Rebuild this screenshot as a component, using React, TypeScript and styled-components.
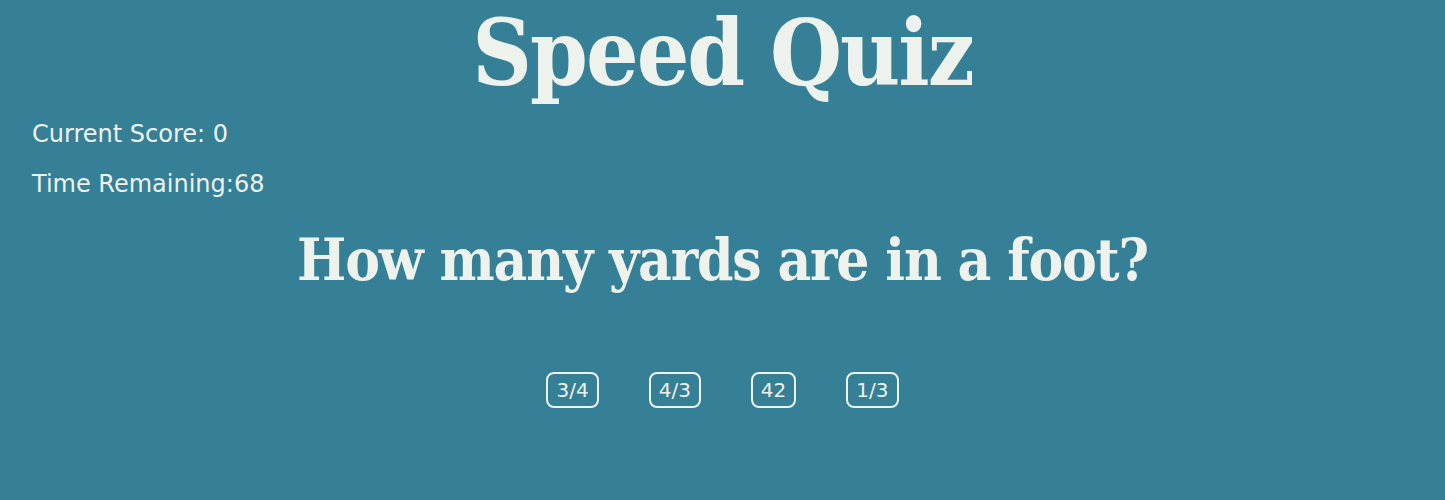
import React from "react";
import styled, { createGlobalStyle } from "styled-components";

const Global = createGlobalStyle`
  html, body { margin: 0; padding: 0; background: #358096; }
  body { font-family: "DejaVu Sans", sans-serif; color: #eef2ec; }
`;

const Page = styled.main`
  min-height: 500px;
  background: #358096;
  color: #eef2ec;
  display: flex;
  flex-direction: column;
`;

const Title = styled.h1`
  margin: 0 0 10px;
  text-align: center;
  font-family: "DejaVu Serif Condensed", "DejaVu Serif", serif;
  font-stretch: condensed;
  font-weight: 700;
  font-size: 92px;
  line-height: 106px;
  letter-spacing: -2px;
`;

const Stats = styled.div`
  padding-left: 32px;
  display: flex;
  flex-direction: column;
  gap: 14px;
`;

const Stat = styled.p`
  margin: 0;
  font-family: "DejaVu Sans", sans-serif;
  font-size: 24px;
  line-height: 36px;
`;

const Question = styled.h2`
  margin: 18px 0 0;
  text-align: center;
  font-family: "DejaVu Serif Condensed", "DejaVu Serif", serif;
  font-stretch: condensed;
  font-weight: 700;
  font-size: 58px;
  line-height: 80px;
  letter-spacing: -1.2px;
`;

const Answers = styled.div`
  margin-top: 72px;
  display: flex;
  justify-content: center;
  gap: 50px;
`;

const Answer = styled.button`
  background: transparent;
  color: #eef2ec;
  border: 2px solid #eef2ec;
  border-radius: 8px;
  padding: 4px 8px;
  font-family: "DejaVu Sans", sans-serif;
  font-size: 20px;
  line-height: 24px;
  cursor: pointer;
`;

export default function App() {
  const answers = ["3/4", "4/3", "42", "1/3"];
  return (
    <>
      <Global />
      <Page>
        <Title>Speed Quiz</Title>
        <Stats>
          <Stat>Current Score: 0</Stat>
          <Stat>Time Remaining:68</Stat>
        </Stats>
        <Question>How many yards are in a foot?</Question>
        <Answers>
          {answers.map((a) => (
            <Answer key={a}>{a}</Answer>
          ))}
        </Answers>
      </Page>
    </>
  );
}
